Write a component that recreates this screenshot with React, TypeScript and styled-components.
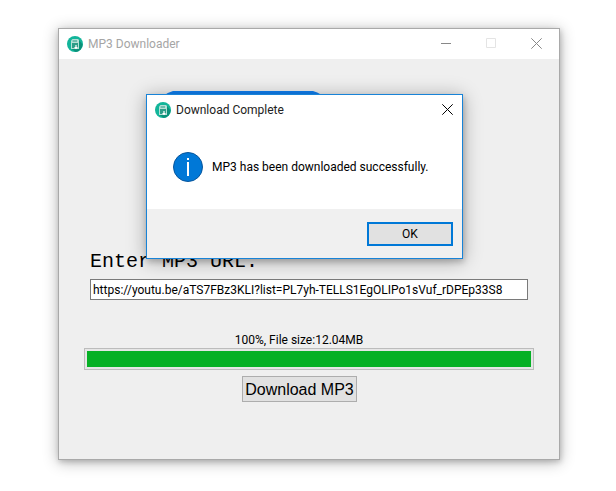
import React, { useId, useState } from "react";
import styled, { createGlobalStyle } from "styled-components";

const GlobalStyle = createGlobalStyle`
  *, *::before, *::after { box-sizing: border-box; }
  body {
    margin: 0;
    background: #ffffff;
    color: #000000;
    font-family: Roboto, "Noto Sans", sans-serif;
    font-size: 12px;
    line-height: 16px;
  }
`;

const Desktop = styled.div`
  display: flex;
  min-height: 100vh;
  padding: 28px 56px 31px 58px;
`;

const AppWindow = styled.section`
  position: relative;
  display: flex;
  flex: 1;
  flex-direction: column;
  min-width: 0;
  border: 1px solid #a9a9a9;
  background: #efefef;
  box-shadow: 0 2px 14px rgba(0, 0, 0, 0.3), 1px 2px 5px rgba(0, 0, 0, 0.16);
`;

const TitleBar = styled.header<{ $active?: boolean }>`
  display: flex;
  align-items: center;
  height: 30px;
  padding-left: 8px;
  gap: 5px;
  background: #ffffff;
  color: ${(p) => (p.$active ? "#222222" : "#a5a5a5")};
`;

const Title = styled.h1`
  flex: 1;
  margin: 0;
  font-size: 12px;
  font-weight: 400;
  line-height: 16px;
  white-space: nowrap;
`;

const CaptionButton = styled.button<{ $compact?: boolean }>`
  display: flex;
  align-items: center;
  align-self: flex-start;
  justify-content: center;
  width: ${(p) => (p.$compact ? "29px" : "45px")};
  height: 29px;
  padding: 0;
  border: 0;
  background: transparent;
  color: ${(p) => (p.$compact ? "#000000" : "inherit")};
`;

const CaptionButtons = styled.div`
  display: flex;
  align-self: flex-start;
  color: #888888;

  button:disabled { color: #e4e4e4; }
`;

const Content = styled.main`
  display: flex;
  flex: 1;
  flex-direction: column;
  padding: 32px 25px 0;
`;

const Logo = styled.svg`
  width: 172px;
  height: 134px;
  margin-left: 75px;
`;

const UrlField = styled.div`
  display: flex;
  flex-direction: column;
  gap: 5px;
  margin-top: 24px;
  padding: 0 6px;
`;

const UrlLabel = styled.label`
  font-family: "Liberation Mono", monospace;
  font-size: 20px;
  line-height: 25px;
`;

const UrlInput = styled.input`
  width: 100%;
  height: 21px;
  padding: 0 2px;
  border: 1px solid #7a7a7a;
  border-radius: 0;
  outline: 0;
  background: #ffffff;
  color: #000000;
  font: inherit;
`;

const Status = styled.p`
  margin: 32px 20px 0 0;
  text-align: center;
`;

const Progress = styled.progress`
  appearance: none;
  width: 100%;
  height: 22px;
  padding: 2px;
  border: 1px solid #bcbcbc;
  background: #e6e6e6;

  &::-webkit-progress-bar { background: #e6e6e6; }
  &::-webkit-progress-value { background: #06b025; }
`;

const DownloadButton = styled.button`
  align-self: center;
  height: 26px;
  margin: 6px 19px 0 0;
  padding: 1px 2px 0;
  border: 1px solid #adadad;
  background: #e1e1e1;
  color: #000000;
  font-family: "Liberation Sans", Arial, sans-serif;
  font-size: 16px;
  line-height: 22px;
`;

const Dialog = styled.div`
  position: absolute;
  top: 65px;
  left: 50%;
  width: 317px;
  margin-left: -163px;
  border: 1px solid #1883d7;
  background: #ffffff;
  box-shadow: 0 2px 18px rgba(0, 0, 0, 0.3), 1px 3px 6px rgba(0, 0, 0, 0.2);
`;

const Message = styled.div`
  display: flex;
  align-items: center;
  gap: 9px;
  height: 84px;
  padding-left: 26px;
  white-space: nowrap;

  p { margin: 0; }
`;

const DialogFooter = styled.footer`
  display: flex;
  justify-content: flex-end;
  padding: 13px 9px 12px;
  background: #f0f0f0;
`;

const OkButton = styled.button`
  width: 86px;
  height: 24px;
  padding: 0;
  border: 2px solid #0078d7;
  background: #e1e1e1;
  color: #000000;
  font: inherit;
`;

function AppIcon() {
  return (
    <svg width="16" height="16" viewBox="0 0 16 16" aria-hidden="true">
      <circle cx="8" cy="8" r="8" fill="#12b59a" />
      <path d="M12 4l3.6 4.6A8 8 0 0 1 8.8 16L4.5 13z" fill="#0b9079" />
      <path d="M5.5 3H11l1 1v9H4V4.5z" fill="#b4dfd6" />
      <path d="M5.6 4.2H10v1.6H5.6z" fill="#5cb4a5" />
      <path d="M5 7h6v5H5z" fill="#2c9d88" />
      <path d="M8.4 9h1.2v2H11l-2 2.2L7 11h1.4z" fill="#ffffff" />
    </svg>
  );
}

function InfoIcon() {
  return (
    <svg width="30" height="30" viewBox="0 0 30 30" aria-hidden="true">
      <circle cx="15" cy="15" r="14.5" fill="#0078d7" stroke="#08559b" />
      <path d="M14 6h2v2h-2zM14 10h2v14h-2z" fill="#ffffff" />
    </svg>
  );
}

function CaptionGlyph({ path }: { path: string }) {
  return (
    <svg width="11" height="11" viewBox="0 0 11 11" fill="none" stroke="currentColor" aria-hidden="true">
      <path d={path} />
    </svg>
  );
}

const CLOSE = "M.3 .3l10.4 10.4M10.7 .3l-10.4 10.4";

export default function App() {
  const [url, setUrl] = useState("https://youtu.be/aTS7FBz3KLI?list=PL7yh-TELLS1EgOLIPo1sVuf_rDPEp33S8");
  const [open, setOpen] = useState(true);
  const urlId = useId();
  const titleId = useId();
  const statusId = useId();

  return (
    <>
      <GlobalStyle />
      <Desktop>
        <AppWindow>
          <TitleBar>
            <AppIcon />
            <Title>MP3 Downloader</Title>
            <CaptionButtons>
              <CaptionButton type="button" aria-label="Minimize">
                <CaptionGlyph path="M0 5.5h10" />
              </CaptionButton>
              <CaptionButton type="button" aria-label="Maximize" disabled>
                <CaptionGlyph path="M.5 .5h9v9h-9z" />
              </CaptionButton>
              <CaptionButton type="button" aria-label="Close">
                <CaptionGlyph path={CLOSE} />
              </CaptionButton>
            </CaptionButtons>
          </TitleBar>

          <Content>
            <Logo viewBox="0 0 172 134" aria-hidden="true">
              <path d="M14 0H154Q172 5 172 24V110Q172 134 148 134H24Q0 134 0 110V24Q-4 5 14 0Z" fill="#1080f2" />
            </Logo>
            <UrlField>
              <UrlLabel htmlFor={urlId}>Enter MP3 URL:</UrlLabel>
              <UrlInput id={urlId} type="text" spellCheck={false} value={url} onChange={(e) => setUrl(e.target.value)} />
            </UrlField>
            <Status id={statusId}>100%, File size:12.04MB</Status>
            <Progress value={100} max={100} aria-labelledby={statusId} />
            <DownloadButton type="button">Download MP3</DownloadButton>
          </Content>

          {open && (
            <Dialog role="dialog" aria-labelledby={titleId}>
              <TitleBar $active>
                <AppIcon />
                <Title as="h2" id={titleId}>Download Complete</Title>
                <CaptionButton type="button" $compact aria-label="Close dialog" onClick={() => setOpen(false)}>
                  <CaptionGlyph path={CLOSE} />
                </CaptionButton>
              </TitleBar>
              <Message>
                <InfoIcon />
                <p>MP3 has been downloaded successfully.</p>
              </Message>
              <DialogFooter>
                <OkButton type="button" onClick={() => setOpen(false)}>OK</OkButton>
              </DialogFooter>
            </Dialog>
          )}
        </AppWindow>
      </Desktop>
    </>
  );
}
